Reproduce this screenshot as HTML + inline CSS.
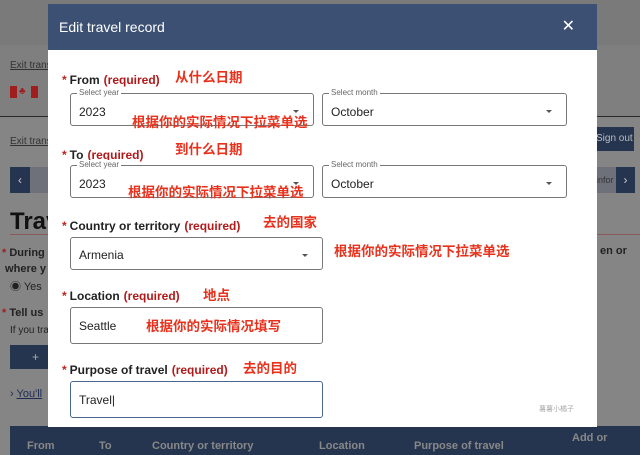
<!DOCTYPE html>
<html><head><meta charset="utf-8"><style>
*{margin:0;padding:0;box-sizing:border-box}
body{width:640px;height:455px;overflow:hidden;position:relative;background:#858585;font-family:"Liberation Sans","Noto Sans CJK SC",sans-serif;}
.a{position:absolute}
.bg{color:#222;font-size:10px}
.lbl{position:absolute;left:62px;font-size:12px;font-weight:bold;color:#222}
.lbl .s{color:#c0211b;margin-right:3px}
.lbl .r{color:#b01a1a;margin-left:4px}
.box{position:absolute;border:1px solid #777;border-radius:3px;background:#fff;font-size:12px;color:#222}
.box .v{position:absolute;left:8px}
.box .leg{position:absolute;left:6px;top:-6px;background:#fff;font-size:8px;color:#666;padding:0 2px;line-height:10px}
.box .ar{position:absolute;right:14px;width:0;height:0;border-left:3px solid transparent;border-right:3px solid transparent;border-top:3px solid #555}
.cn{position:absolute;color:#e8311c;font-size:13.5px;font-family:"Noto Sans CJK SC",sans-serif;font-weight:bold;line-height:16px}
</style></head><body>
<div class="a" style="left:0;top:0;width:640px;height:45px;background:#7a7a7a"></div>
<div class="a" style="left:0;top:45px;width:640px;height:72px;background:#7f7f7f"></div>
<div class="a" style="left:0;top:116px;width:640px;height:1px;background:#2a2a2a"></div>
<div class="a bg" style="left:10px;top:60px;text-decoration:underline;color:#333">Exit trans</div>
<div class="a" style="left:10px;top:86px;width:7px;height:12px;background:#a01d1d"></div>
<div class="a" style="left:19px;top:86px;width:10px;height:12px;color:#a01d1d;font-size:10px;line-height:12px">♣</div>
<div class="a" style="left:31px;top:86px;width:7px;height:12px;background:#a01d1d"></div>
<div class="a bg" style="left:10px;top:136px;text-decoration:underline;color:#333">Exit trans</div>
<div class="a" style="left:10px;top:167px;width:20px;height:26px;background:#26354f;color:#ccc;font-size:12px;text-align:center;line-height:26px">‹</div>
<div class="a" style="left:30px;top:167px;width:20px;height:26px;background:#6e717a"></div>
<div class="a" style="left:596px;top:127px;width:38px;height:24px;background:#26354f;color:#bbb;font-size:10px;line-height:24px">Sign out</div>
<div class="a" style="left:596px;top:167px;width:20px;height:26px;background:#6e717a;color:#333;font-size:9px;line-height:26px">infor</div>
<div class="a" style="left:616px;top:167px;width:19px;height:26px;background:#26354f;color:#ccc;font-size:12px;text-align:center;line-height:26px">›</div>
<div class="a" style="left:10px;top:208px;font-size:24px;font-weight:bold;color:#111">Trav</div>
<div class="a" style="left:10px;top:234px;width:630px;height:1px;background:#8a5a5a"></div>
<div class="a bg" style="left:2px;top:245px;font-size:11px;font-weight:bold;line-height:16px"><span style="color:#a01d1d">*</span> During<br>&nbsp;where y</div>
<div class="a bg" style="left:600px;top:245px;font-size:11px;font-weight:bold">en or</div>
<div class="a bg" style="left:10px;top:278px;font-size:11px">◉ Yes</div>
<div class="a bg" style="left:2px;top:307px;font-size:11px;font-weight:bold"><span style="color:#a01d1d">*</span> Tell us</div>
<div class="a bg" style="left:10px;top:325px">If you tra</div>
<div class="a" style="left:10px;top:345px;width:38px;height:24px;background:#26354f;color:#aaa;font-size:12px;line-height:24px;padding-left:22px">+</div>
<div class="a bg" style="left:10px;top:388px;font-size:11px;color:#1f2d55">› <u>You'll</u></div>
<div class="a" style="left:10px;top:426px;width:630px;height:29px;background:#26354f;color:#888;font-size:11px;font-weight:bold">
<span class="a" style="left:17px;top:14px">From</span><span class="a" style="left:89px;top:14px">To</span><span class="a" style="left:142px;top:14px">Country or territory</span><span class="a" style="left:309px;top:14px">Location</span><span class="a" style="left:404px;top:14px">Purpose of travel</span><span class="a" style="left:562px;top:6px">Add or</span></div>

<div class="a" style="left:48px;top:4px;width:549px;height:423px;background:#fff">
<div style="height:46px;background:#3c5073;color:#fff;font-size:14px;line-height:46px;padding-left:11px">Edit travel record<span style="position:absolute;right:22px;font-size:16px">✕</span></div>
</div>

<div class="lbl" style="top:73px"><span class="s">*</span>From<span class="r">(required)</span></div>
<div class="cn" style="left:175px;top:68px">从什么日期</div>
<div class="box" style="left:70px;top:93px;width:244px;height:33px"><span class="leg">Select year</span><span class="v" style="top:11px">2023</span><span class="ar" style="top:16px"></span></div>
<div class="box" style="left:322px;top:93px;width:245px;height:33px"><span class="leg">Select month</span><span class="v" style="top:11px">October</span><span class="ar" style="top:16px"></span></div>
<div class="cn" style="left:132px;top:113px">根据你的实际情况下拉菜单选</div>

<div class="lbl" style="top:148px"><span class="s">*</span>To<span class="r">(required)</span></div>
<div class="cn" style="left:175px;top:140px">到什么日期</div>
<div class="box" style="left:70px;top:165px;width:244px;height:33px"><span class="leg">Select year</span><span class="v" style="top:11px">2023</span><span class="ar" style="top:16px"></span></div>
<div class="box" style="left:322px;top:165px;width:245px;height:33px"><span class="leg">Select month</span><span class="v" style="top:11px">October</span><span class="ar" style="top:16px"></span></div>
<div class="cn" style="left:128px;top:183px">根据你的实际情况下拉菜单选</div>

<div class="lbl" style="top:219px"><span class="s">*</span>Country or territory<span class="r">(required)</span></div>
<div class="cn" style="left:263px;top:213px">去的国家</div>
<div class="box" style="left:70px;top:237px;width:253px;height:33px"><span class="v" style="top:10px">Armenia</span><span class="ar" style="top:16px"></span></div>
<div class="cn" style="left:334px;top:242px">根据你的实际情况下拉菜单选</div>

<div class="lbl" style="top:289px"><span class="s">*</span>Location<span class="r">(required)</span></div>
<div class="cn" style="left:203px;top:286px">地点</div>
<div class="box" style="left:70px;top:307px;width:253px;height:37px"><span class="v" style="top:11px">Seattle</span></div>
<div class="cn" style="left:146px;top:317px">根据你的实际情况填写</div>

<div class="lbl" style="top:363px"><span class="s">*</span>Purpose of travel<span class="r">(required)</span></div>
<div class="cn" style="left:243px;top:359px">去的目的</div>
<div class="box" style="left:70px;top:381px;width:253px;height:37px;border:1.5px solid #4a6590"><span class="v" style="top:11px">Travel|</span></div>
<div class="a" style="left:539px;top:404px;font-size:7px;color:#aaa;font-family:'Noto Sans CJK SC',sans-serif">薯薯小橘子</div>
</body></html>
